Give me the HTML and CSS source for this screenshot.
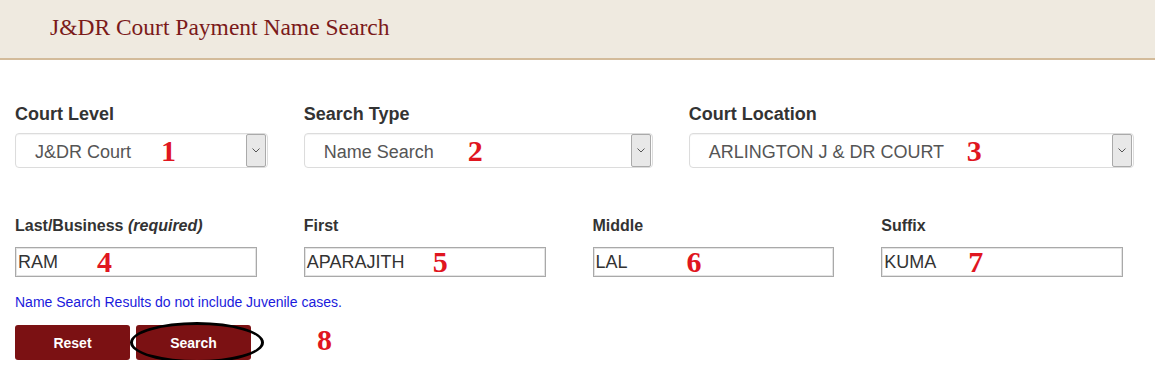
FILE: index.html
```html
<!DOCTYPE html>
<html lang="en">
<head>
  <meta charset="UTF-8" />
  <title>J&amp;DR Court Payment Name Search</title>
  <link rel="stylesheet" href="styles.css">
</head>
<body>

  <div class="page-header">
    <h1>J&amp;DR Court Payment Name Search</h1>
  </div>

  <div class="search-form">
    <div class="row row-top">
      <div class="col col-3">
        <label class="big-label">Court Level</label>
        <div class="select-box">
          <span class="select-text">J&amp;DR Court</span>
          <span class="select-arrow"><svg width="8" height="5" viewBox="0 0 8 5"><path d="M0.5 0.5 L4 4 L7.5 0.5" fill="none" stroke="#555" stroke-width="1"/></svg></span>
          <span class="mark" style="left:145px">1</span>
        </div>
      </div>
      <div class="col col-4">
        <label class="big-label">Search Type</label>
        <div class="select-box">
          <span class="select-text">Name Search</span>
          <span class="select-arrow"><svg width="8" height="5" viewBox="0 0 8 5"><path d="M0.5 0.5 L4 4 L7.5 0.5" fill="none" stroke="#555" stroke-width="1"/></svg></span>
          <span class="mark" style="left:163px">2</span>
        </div>
      </div>
      <div class="col col-5">
        <label class="big-label">Court Location</label>
        <div class="select-box">
          <span class="select-text">ARLINGTON J &amp; DR COURT</span>
          <span class="select-arrow"><svg width="8" height="5" viewBox="0 0 8 5"><path d="M0.5 0.5 L4 4 L7.5 0.5" fill="none" stroke="#555" stroke-width="1"/></svg></span>
          <span class="mark" style="left:277px">3</span>
        </div>
      </div>
    </div>

    <div class="row row-names">
      <div class="col col-3">
        <label class="small-label">Last/Business <i>(required)</i></label>
        <div class="text-box">RAM<span class="mark" style="left:81px">4</span></div>
      </div>
      <div class="col col-3">
        <label class="small-label">First</label>
        <div class="text-box">APARAJITH<span class="mark" style="left:128px">5</span></div>
      </div>
      <div class="col col-3">
        <label class="small-label">Middle</label>
        <div class="text-box">LAL<span class="mark" style="left:93px">6</span></div>
      </div>
      <div class="col col-3">
        <label class="small-label">Suffix</label>
        <div class="text-box">KUMA<span class="mark" style="left:86px">7</span></div>
      </div>
    </div>

    <p class="note">Name Search Results do not include Juvenile cases.</p>

    <div class="actions">
      <button class="button">Reset</button>
      <button class="button search-button">Search<span class="circle"></span></button>
      <span class="mark mark-8">8</span>
    </div>
  </div>

</body>
</html>
```

FILE: styles.css
```css
body {
  margin: 0;
  padding: 0;
  font-family: "Liberation Sans", Arial, sans-serif;
  background-color: #fff;
  color: #333;
}
.page-header {
  height: 58px;
  background-color: #efeae0;
  border-bottom: 2px solid #d3bb9a;
}
.page-header h1 {
  margin: 0;
  padding: 12px 0 0 50px;
  font-family: "Liberation Serif", "Times New Roman", serif;
  font-weight: normal;
  font-size: 23.5px;
  line-height: 30px;
  color: #7b1a1a;
}
.search-form {
  padding-top: 42px;
}
.row {
  display: flex;
}
.col {
  box-sizing: border-box;
  padding: 0 15px;
}
.col-3 { width: 25%; }
.col-4 { width: 33.3333%; }
.col-5 { width: 41.6667%; }

.big-label {
  display: block;
  font-size: 18px;
  font-weight: bold;
  line-height: 24px;
  margin-bottom: 7px;
}
.small-label {
  display: block;
  font-size: 16px;
  font-weight: bold;
  line-height: 20px;
  margin-bottom: 11px;
}
.small-label i {
  font-weight: bold;
}
.select-box {
  position: relative;
  display: flex;
  align-items: stretch;
  box-sizing: border-box;
  width: calc(100% - 6px);
  height: 35px;
  border: 1px solid #dcdcdc;
  border-radius: 4px;
  box-shadow: inset 0 1px 1px rgba(0, 0, 0, 0.05);
  background: #fff;
}
.select-text {
  flex: 1;
  padding-left: 19px;
  font-size: 18px;
  line-height: 36px;
  color: #555;
}
.select-arrow {
  display: flex;
  align-items: center;
  justify-content: center;
  width: 18px;
  margin: 0 1px 0 0;
  background-color: #e8e8e8;
  border: 1px solid #aaa;
  border-radius: 2px;
}
.row-names {
  margin-top: 48px;
}
.text-box {
  position: relative;
  box-sizing: border-box;
  width: calc(100% - 17px);
  height: 30px;
  border: 1px solid #a9a9a9;
  box-shadow: inset 0 0 0 1px #e4e4e4;
  padding-left: 2px;
  font-size: 18px;
  line-height: 29px;
  color: #333;
}
.mark {
  position: absolute;
  top: 2px;
  font-family: "Liberation Serif", "Times New Roman", serif;
  font-weight: bold;
  font-size: 30px;
  line-height: 30px;
  color: #e0161f;
}
.text-box .mark {
  top: -1px;
}
.note {
  margin: 16px 0 0 15px;
  font-size: 14px;
  line-height: 18px;
  color: #1a1adc;
}
.actions {
  position: relative;
  display: flex;
  gap: 6px;
  margin: 14px 0 0 15px;
}
.button {
  position: relative;
  width: 115px;
  height: 35px;
  background-color: #7b1113;
  color: #fff;
  border: none;
  border-radius: 3px;
  font-family: "Liberation Sans", Arial, sans-serif;
  font-size: 14px;
  font-weight: bold;
}
.circle {
  position: absolute;
  left: -6px;
  top: -3px;
  width: 134px;
  height: 41px;
  box-sizing: border-box;
  border: 3px solid #000;
  border-radius: 50%;
}
.mark-8 {
  left: 302px;
  top: 0;
}
```
